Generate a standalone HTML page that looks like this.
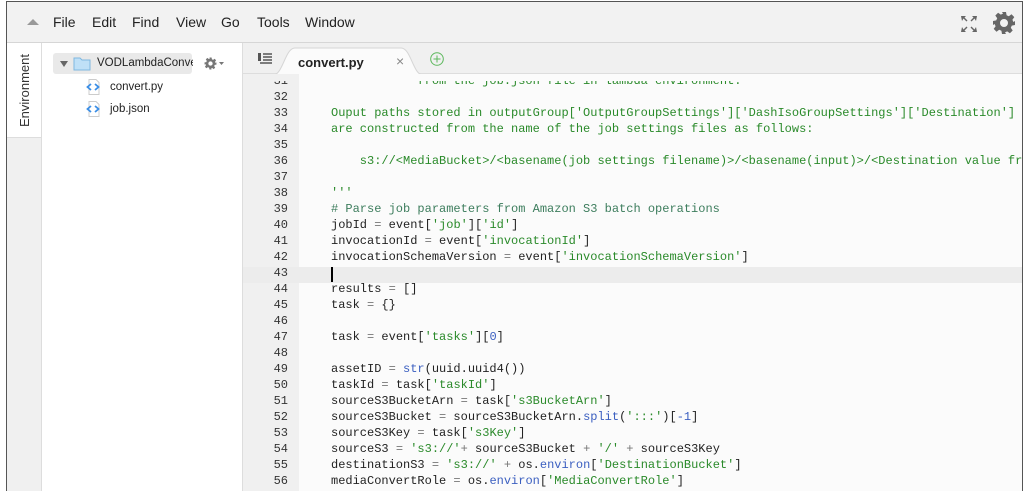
<!DOCTYPE html>
<html><head><meta charset="utf-8"><style>
*{margin:0;padding:0;box-sizing:border-box}
body{width:1030px;height:489px;background:#fff;position:relative;overflow:hidden;font-family:"Liberation Sans",sans-serif}
.frame{position:absolute;left:6px;top:1px;width:1017px;height:490px;border:1px solid #555;border-bottom:none;overflow:hidden;background:#fff}
.menubar{position:absolute;left:0;top:0;right:0;height:41px;background:#f2f2f2;border-bottom:1px solid #d6d6d6}
.menubar span{position:absolute;top:12px;font-size:14px;color:#222}
.left{position:absolute;left:0;top:41px;width:35px;bottom:0;background:#fff;border-right:1px solid #ddd}
.left .gray{position:absolute;left:0;top:94px;right:0;bottom:0;background:#f0f0f0;border-top:1px solid #ddd}
.env{position:absolute;left:10px;top:84px;transform:rotate(-90deg);transform-origin:0 0;font-size:13px;color:#333;white-space:nowrap}
.side{position:absolute;left:35px;top:41px;width:201px;bottom:0;background:#fff;border-right:1px solid #ddd}
.code{position:absolute;left:236px;top:41px;right:0;bottom:0;background:#f0f0f0}
.tabbar{position:absolute;left:0;top:0;right:0;height:31px;background:#f0f0f0;border-bottom:1px solid #ddd}
.gutter{position:absolute;left:0;top:31px;width:56px;bottom:0;background:#f0f0f0}
.editor{position:absolute;left:56px;top:31px;right:0;bottom:0;background:#fbfbfb}
.ln{position:absolute;left:0;width:46px;text-align:right;font:12px/16px "Liberation Mono",monospace;color:#333}
.cl{position:absolute;left:89px;white-space:pre;font:12px/16px "Liberation Mono",monospace;color:#222}
.g{color:#2a8a2a}.c{color:#3d7d5d}.b{color:#3b5fc0}.o{color:#777}
</style></head><body>
<div class="frame">
<div class="menubar">
<svg style="position:absolute;left:20px;top:16px" width="12" height="8"><path d="M0 7 L6 1 L12 7Z" fill="#999"/></svg>
<span style="left:46px">File</span><span style="left:85px">Edit</span><span style="left:125px">Find</span><span style="left:169px">View</span><span style="left:214px">Go</span><span style="left:250px">Tools</span><span style="left:298px">Window</span>
<svg style="position:absolute;left:953px;top:13px" width="18" height="18" fill="#666"><path d="M1 1h5l-1.5 1.5 3 3-1 1-3-3L2 6z M17 1h-5l1.5 1.5-3 3 1 1 3-3L16 6z M1 17h5l-1.5-1.5 3-3-1-1-3 3L2 12z M17 17h-5l1.5-1.5-3-3 1-1 3 3L16 12z"/></svg>
<svg style="position:absolute;left:985px;top:9px" width="24" height="24" viewBox="0 0 24 24"><path fill="#666" d="M10 1h4l.6 3.2 2.2 1 2.7-1.9 2.8 2.8-1.9 2.7 1 2.2L23 10v4l-3.2.6-1 2.2 1.9 2.7-2.8 2.8-2.7-1.9-2.2 1L14 23h-4l-.6-3.2-2.2-1-2.7 1.9-2.8-2.8 1.9-2.7-1-2.2L1 14v-4l3.2-.6 1-2.2-1.9-2.7 2.8-2.8 2.7 1.9 2.2-1zM12 8a4 4 0 100 8 4 4 0 000-8z"/></svg>
</div>
<div class="left"><div class="gray"></div><div class="env">Environment</div></div>
<div class="side">
<div style="position:absolute;left:11px;top:10px;width:139px;height:21px;background:#e9e9e9;border-radius:3px"></div>
<svg style="position:absolute;left:18px;top:18px" width="8" height="6"><path d="M0 0h8L4 6z" fill="#666"/></svg>
<svg style="position:absolute;left:31px;top:13px" width="18" height="15"><path d="M1 2h6l2 2h8v10H1z" fill="#bfe0f7" stroke="#7fb8e0"/></svg>
<span style="position:absolute;left:55px;top:14px;font-size:11.5px;color:#222;width:96px;overflow:hidden;white-space:nowrap">VODLambdaConvert</span>
<svg style="position:absolute;left:162px;top:14px" width="13" height="13" viewBox="0 0 24 24"><path fill="#777" d="M10 1h4l.6 3.2 2.2 1 2.7-1.9 2.8 2.8-1.9 2.7 1 2.2L23 10v4l-3.2.6-1 2.2 1.9 2.7-2.8 2.8-2.7-1.9-2.2 1L14 23h-4l-.6-3.2-2.2-1-2.7 1.9-2.8-2.8 1.9-2.7-1-2.2L1 14v-4l3.2-.6 1-2.2-1.9-2.7 2.8-2.8 2.7 1.9 2.2-1zM12 8a4 4 0 100 8 4 4 0 000-8z"/></svg>
<svg style="position:absolute;left:177px;top:19px" width="5" height="3"><path d="M0 0h5L2.5 3z" fill="#777"/></svg>
<svg style="position:absolute;left:44px;top:36px" width="14" height="16"><path d="M3 .5h7l3 3v12H3z" fill="#fff" stroke="#ccc"/><path d="M5 5L1.5 8 5 11M9 5l3.5 3L9 11" stroke="#3a8ee6" stroke-width="1.8" fill="none"/></svg>
<span style="position:absolute;left:68px;top:38px;font-size:11.5px;color:#222">convert.py</span>
<svg style="position:absolute;left:44px;top:58px" width="14" height="16"><path d="M3 .5h7l3 3v12H3z" fill="#fff" stroke="#ccc"/><path d="M5 5L1.5 8 5 11M9 5l3.5 3L9 11" stroke="#3a8ee6" stroke-width="1.8" fill="none"/></svg>
<span style="position:absolute;left:68px;top:60px;font-size:11.5px;color:#222">job.json</span>
</div>
<div class="code">
<div class="tabbar">
<svg style="position:absolute;left:15px;top:10px" width="14" height="11"><path d="M0 1h3M5 1h9M5 4h9M5 7h9M2 10h12" stroke="#555" stroke-width="1.6"/><path d="M0 0h3v8H0z" fill="#555"/></svg>
<svg style="position:absolute;left:30px;top:4px" width="150" height="28"><path d="M0 28 C10 28 12 1 22 1 H128 C138 1 140 28 150 28Z" fill="#fbfbfb" stroke="#d6d6d6"/></svg>
<span style="position:absolute;left:55px;top:12px;font-size:13px;font-weight:bold;color:#222">convert.py</span>
<span style="position:absolute;left:153px;top:10px;font-size:14px;color:#888">×</span>
<svg style="position:absolute;left:187px;top:9px" width="14" height="14"><circle cx="7" cy="7" r="6.3" fill="none" stroke="#5cb85c"/><path d="M7 3.5v7M3.5 7h7" stroke="#5cb85c"/></svg>
</div>
<div class="gutter"></div>
<div class="editor"></div>
<div style="position:absolute;left:0;right:0;top:224px;height:16px;background:#ececec"></div>
<div style="position:absolute;left:88px;top:224px;width:2px;height:15px;background:#000"></div>
</div>
</div>
<div style="position:absolute;left:242px;top:2px;width:788px;height:487px">
<div class="ln" style="top:71px;clip-path:inset(8px 0 0 0)">31</div><div class="cl g" style="top:71px;clip-path:inset(8px 0 0 0)">            from the job.json file in lambda environment.</div>
<div class="ln" style="top:87px">32</div>
<div class="ln" style="top:103px">33</div><div class="cl g" style="top:103px">Ouput paths stored in outputGroup['OutputGroupSettings']['DashIsoGroupSettings']['Destination']</div>
<div class="ln" style="top:119px">34</div><div class="cl g" style="top:119px">are constructed from the name of the job settings files as follows:</div>
<div class="ln" style="top:135px">35</div>
<div class="ln" style="top:151px">36</div><div class="cl g" style="top:151px">    s3://&lt;MediaBucket&gt;/&lt;basename(job settings filename)&gt;/&lt;basename(input)&gt;/&lt;Destination value from</div>
<div class="ln" style="top:167px">37</div>
<div class="ln" style="top:183px">38</div><div class="cl g" style="top:183px">'''</div>
<div class="ln" style="top:199px">39</div><div class="cl c" style="top:199px"># Parse job parameters from Amazon S3 batch operations</div>
<div class="ln" style="top:215px">40</div><div class="cl" style="top:215px">jobId <span class="o">=</span> event[<span class="g">'job'</span>][<span class="g">'id'</span>]</div>
<div class="ln" style="top:231px">41</div><div class="cl" style="top:231px">invocationId <span class="o">=</span> event[<span class="g">'invocationId'</span>]</div>
<div class="ln" style="top:247px">42</div><div class="cl" style="top:247px">invocationSchemaVersion <span class="o">=</span> event[<span class="g">'invocationSchemaVersion'</span>]</div>
<div class="ln" style="top:263px">43</div>
<div class="ln" style="top:279px">44</div><div class="cl" style="top:279px">results <span class="o">=</span> []</div>
<div class="ln" style="top:295px">45</div><div class="cl" style="top:295px">task <span class="o">=</span> {}</div>
<div class="ln" style="top:311px">46</div>
<div class="ln" style="top:327px">47</div><div class="cl" style="top:327px">task <span class="o">=</span> event[<span class="g">'tasks'</span>][<span class="b">0</span>]</div>
<div class="ln" style="top:343px">48</div>
<div class="ln" style="top:359px">49</div><div class="cl" style="top:359px">assetID <span class="o">=</span> <span class="b">str</span>(uuid.uuid4())</div>
<div class="ln" style="top:375px">50</div><div class="cl" style="top:375px">taskId <span class="o">=</span> task[<span class="g">'taskId'</span>]</div>
<div class="ln" style="top:391px">51</div><div class="cl" style="top:391px">sourceS3BucketArn <span class="o">=</span> task[<span class="g">'s3BucketArn'</span>]</div>
<div class="ln" style="top:407px">52</div><div class="cl" style="top:407px">sourceS3Bucket <span class="o">=</span> sourceS3BucketArn.<span class="b">split</span>(<span class="g">':::'</span>)[<span class="b">-1</span>]</div>
<div class="ln" style="top:423px">53</div><div class="cl" style="top:423px">sourceS3Key <span class="o">=</span> task[<span class="g">'s3Key'</span>]</div>
<div class="ln" style="top:439px">54</div><div class="cl" style="top:439px">sourceS3 <span class="o">=</span> <span class="g">'s3://'</span><span class="o">+</span> sourceS3Bucket <span class="o">+</span> <span class="g">'/'</span> <span class="o">+</span> sourceS3Key</div>
<div class="ln" style="top:455px">55</div><div class="cl" style="top:455px">destinationS3 <span class="o">=</span> <span class="g">'s3://'</span> <span class="o">+</span> os.<span class="b">environ</span>[<span class="g">'DestinationBucket'</span>]</div>
<div class="ln" style="top:471px">56</div><div class="cl" style="top:471px">mediaConvertRole <span class="o">=</span> os.<span class="b">environ</span>[<span class="g">'MediaConvertRole'</span>]</div>
</div>
<div style="position:absolute;left:1023px;top:0;width:7px;height:489px;background:#fff"></div>
</body></html>
